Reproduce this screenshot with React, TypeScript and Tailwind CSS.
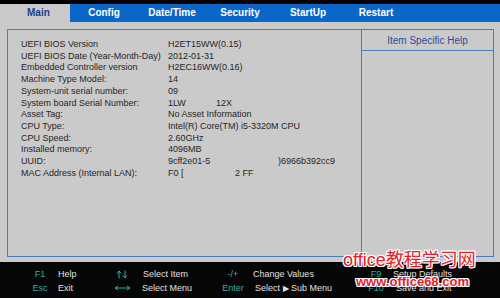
import type { ReactNode } from "react";

const ROWS: [string, ReactNode][] = [
  ["UEFI BIOS Version", "H2ET15WW(0.15)"],
  ["UEFI BIOS Date (Year-Month-Day)", "2012-01-31"],
  ["Embedded Controller version", "H2EC16WW(0.16)"],
  ["Machine Type Model:", "14"],
  ["System-unit serial number:", "09"],
  [
    "System board Serial Number:",
    <>
      <span className="inline-block w-[48px]">1LW</span>12X
    </>,
  ],
  ["Asset Tag:", "No Asset Information"],
  ["CPU Type:", "Intel(R) Core(TM) i5-3320M CPU"],
  ["CPU Speed:", "2.60GHz"],
  ["Installed memory:", "4096MB"],
  [
    "UUID:",
    <>
      <span className="inline-block w-[110px]">9cff2e01-5</span>)6966b392cc9
    </>,
  ],
  [
    "MAC Address (Internal LAN):",
    <>
      <span className="inline-block w-[67px]">F0 [</span>2 FF
    </>,
  ],
];

const TABS = ["Config", "Date/Time", "Security", "StartUp", "Restart"];

const outline =
  "[text-shadow:1px_1px_0_#fff,-1px_-1px_0_#fff,1px_-1px_0_#fff,-1px_1px_0_#fff,0_1px_0_#fff,1px_0_0_#fff,0_-1px_0_#fff,-1px_0_0_#fff]";

export default function App() {
  return (
    <div
      className="relative w-[500px] h-[298px] overflow-hidden flex flex-col bg-[#cacaca]"
      style={{ fontFamily: '"Liberation Sans", Arial, sans-serif' }}
    >
      <div className="h-[4px] bg-black" />

      <div className="h-[18px] flex text-[10px] font-bold leading-[18px]">
        <div className="w-[70px] bg-[#c9c9c9] text-[#1c3e8e] pl-[27px]">Main</div>
        <div className="flex-1 flex bg-[#0b66c9] text-white">
          {TABS.map((t) => (
            <div key={t} className="w-[68px] text-center">
              {t}
            </div>
          ))}
        </div>
      </div>

      <div className="flex-1 pt-[7px] pl-[7px] pr-[6px] pb-[5px] flex">
        <div className="flex-1 flex border border-[#4a7cc0]">
          <div className="flex-1 pt-[9px] pl-[13px] text-[9px] leading-[11.7px] text-[#262626]">
            {ROWS.map(([label, value], i) => (
              <div key={i} className="flex whitespace-nowrap">
                <div className="w-[147px]">{label}</div>
                <div>{value}</div>
              </div>
            ))}
          </div>
          <div className="w-[132px] border-l border-[#4a7cc0] flex flex-col">
            <div className="h-[21px] border-b border-[#4a7cc0] text-center text-[10px] leading-[21px] text-[#2d4a9a]">
              Item Specific Help
            </div>
          </div>
        </div>
      </div>

      <div className="h-[36px] bg-[#060606] pt-[6px] pl-[30px] text-[9px] leading-[13.5px] text-[#e2e2e2]">
        <div className="grid grid-cols-[20px_8px_55px_18px_11px_80px_22px_9px_111px_24px_5px_1fr] whitespace-nowrap">
          <div className="text-center text-[#26b2a6]">F1</div>
          <div />
          <div>Help</div>
          <div className="flex items-center justify-center">
            <svg width="12" height="9" viewBox="0 0 12 9">
              <path d="M3 8.5V1M3 1L1 3.5M3 1L5 3.5M9 0.5V8M9 8L7 5.5M9 8L11 5.5" stroke="#26b2a6" strokeWidth="1" fill="none" />
            </svg>
          </div>
          <div />
          <div className="pl-[1px]">Select Item</div>
          <div className="text-center text-[#26b2a6]">-/+</div>
          <div />
          <div>Change Values</div>
          <div className="text-center text-[#26b2a6]">F9</div>
          <div />
          <div>Setup Defaults</div>

          <div className="text-center text-[#26b2a6]">Esc</div>
          <div />
          <div>Exit</div>
          <div className="flex items-center justify-center">
            <svg width="17" height="6" viewBox="0 0 17 6">
              <path d="M1 3H16M1 3L4 1M1 3L4 5M16 3L13 1M16 3L13 5" stroke="#26b2a6" strokeWidth="1" fill="none" />
            </svg>
          </div>
          <div />
          <div>Select Menu</div>
          <div className="text-center text-[#26b2a6]">Enter</div>
          <div />
          <div className="pl-[2px]">
            Select <span className="text-[8px]">▶</span> Sub Menu
          </div>
          <div className="text-center text-[#26b2a6]">F10</div>
          <div />
          <div className="pl-[3px]">Save and Exit</div>
        </div>
      </div>

      <div
        className={`absolute left-[343px] top-[250px] text-[18px] leading-[20px] text-[#e5202a] whitespace-nowrap ${outline}`}
        style={{ fontFamily: '"Liberation Sans", "Noto Sans CJK SC", sans-serif' }}
      >
        office教程学习网
      </div>
      <div
        className={`absolute left-[356px] top-[275px] text-[13px] leading-[14px] font-bold text-[#e5202a] whitespace-nowrap ${outline}`}
      >
        www.office68.com
      </div>
    </div>
  );
}
